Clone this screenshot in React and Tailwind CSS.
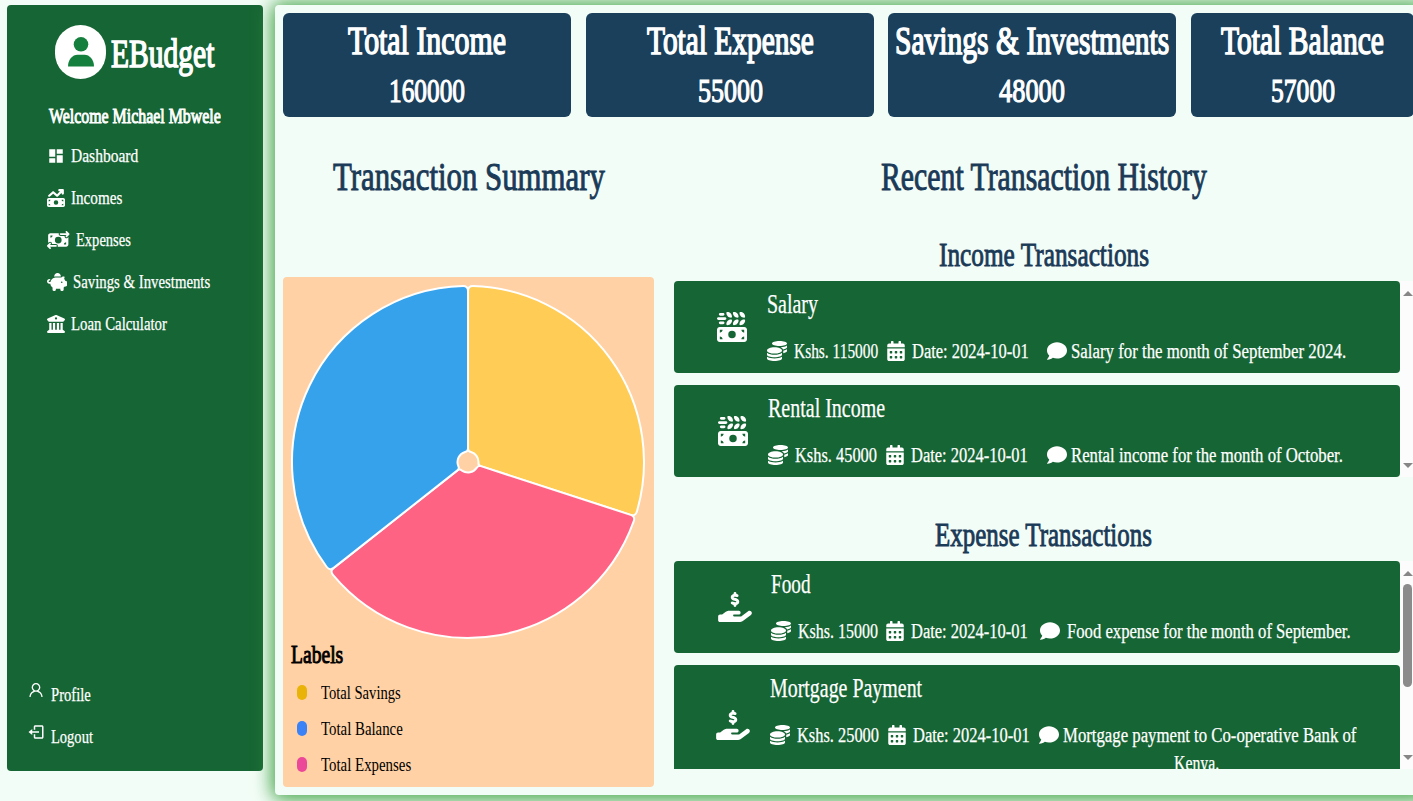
import React, { useLayoutEffect, useRef, useState } from "react";
import { MdDashboard } from "react-icons/md";
import { FaMoneyBillTrendUp, FaMoneyBillTransfer, FaMoneyBillWheat, FaHandHoldingDollar, FaPiggyBank, FaBuildingColumns } from "react-icons/fa6";
import { FaCalendarAlt, FaCoins, FaComment } from "react-icons/fa";
import { AiOutlineUser } from "react-icons/ai";
import { BiLogOut } from "react-icons/bi";

// Condenses a line of serif text to the given width.
function Condensed({ w, className = "", children }) {
  const ref = useRef(null);
  const [scale, setScale] = useState(0.8);
  useLayoutEffect(() => {
    setScale(w / ref.current.offsetWidth);
  }, [w, children]);
  return (
    <span className={"inline-flex shrink-0 whitespace-nowrap " + className} style={{ width: w }}>
      <span ref={ref} className="block shrink-0 origin-left" style={{ transform: `scaleX(${scale})` }}>
        {children}
      </span>
    </span>
  );
}

const nav = [
  { icon: MdDashboard, label: "Dashboard", w: 67, iconClass: "w-[18px]" },
  { icon: FaMoneyBillTrendUp, label: "Incomes", w: 51, iconClass: "w-[18px]" },
  { icon: FaMoneyBillTransfer, label: "Expenses", w: 55, iconClass: "w-[22.5px]" },
  { icon: FaPiggyBank, label: "Savings & Investments", w: 137, iconClass: "w-5" },
  { icon: FaBuildingColumns, label: "Loan Calculator", w: 96, iconClass: "w-[18px]" },
];

const cards = [
  ["Total Income", 158, "160000", 76, "w-72"],
  ["Total Expense", 167, "55000", 65, "w-72"],
  ["Savings & Investments", 274, "48000", 66, "w-72"],
  ["Total Balance", 163, "57000", 64, "w-[223px]"],
];

function Sidebar() {
  return (
    <aside className="ml-[7px] mt-[5px] flex h-[766px] w-64 shrink-0 flex-col rounded bg-[#166534] text-[19px] text-white">
      <div className="flex items-center gap-[5px] pl-12 pt-5">
        <div className="flex h-[54px] w-[51px] items-center justify-center rounded-full bg-white">
          <svg viewBox="0 0 26 30" className="h-[30px] w-[26px] fill-[#15803d]">
            <circle cx="13" cy="7.300" r="7.300" />
            <path d="M0 29.500C0 22.500 4.500 17.700 9.500 17.700h7C21.500 17.700 26 22.500 26 29.500z" />
          </svg>
        </div>
        <Condensed w={103} className="mt-0.5 text-[41px] leading-[50px] [-webkit-text-stroke:1.600px_white]">EBudget</Condensed>
      </div>
      <div className="mt-[23px] h-[29px] pl-[42px] leading-[28px]">
        <Condensed w={172} className="text-[22px] [-webkit-text-stroke:1px_white]">Welcome Michael Mbwele</Condensed>
      </div>
      <nav className="mt-[11px] flex flex-col gap-3.5 pl-10">
        {nav.map(({ icon: Icon, label, w, iconClass }) => (
          <div key={label} className="flex h-7 items-center gap-1.5">
            <Icon className={"h-[18px] shrink-0 " + iconClass} />
            <Condensed w={w} className="[-webkit-text-stroke:0.250px_white]">{label}</Condensed>
          </div>
        ))}
      </nav>
      <div className="mb-5 mt-auto flex flex-col gap-3.5 pl-5">
        <div className="flex h-7 items-center gap-1.5">
          <AiOutlineUser className="-mt-2.5 h-[18px] w-[18px]" />
          <Condensed w={40} className="[-webkit-text-stroke:0.250px_white]">Profile</Condensed>
        </div>
        <div className="flex h-7 items-center gap-1.5">
          <BiLogOut className="-mt-2.5 h-[18px] w-[18px]" />
          <Condensed w={42} className="[-webkit-text-stroke:0.250px_white]">Logout</Condensed>
        </div>
      </div>
    </aside>
  );
}

const C = 178;
function pt(deg, r, shift = 0) {
  const a = ((deg - 90) * Math.PI) / 180 + shift / r;
  return `${(C + r * Math.cos(a)).toFixed(2)} ${(C + r * Math.sin(a)).toFixed(2)}`;
}

// Ring segment with rounded corners.
function slice(a0, a1) {
  const R = 176;
  const r = 10.5;
  const k = 5;
  const n = 3;
  const large = a1 - a0 > 180 ? 1 : 0;
  return [
    `M${pt(a0, r + n)}L${pt(a0, R - k)}Q${pt(a0, R)} ${pt(a0, R, k)}`,
    `A${R} ${R} 0 ${large} 1 ${pt(a1, R, -k)}Q${pt(a1, R)} ${pt(a1, R - k)}`,
    `L${pt(a1, r + n)}Q${pt(a1, r)} ${pt(a1, r, -n)}`,
    `A${r} ${r} 0 ${large} 0 ${pt(a0, r, n)}Q${pt(a0, r)} ${pt(a0, r + n)}Z`,
  ].join("");
}

function Pie() {
  return (
    <svg viewBox="0 0 356 356" className="mb-px ml-[7px] mt-1.5 h-[356px] w-[356px]" stroke="#fff" strokeWidth="2" strokeLinejoin="round">
      <path fill="#ffcd56" d={slice(0, 108)} />
      <path fill="#ff6384" d={slice(108, 231.75)} />
      <path fill="#36a2eb" d={slice(231.75, 360)} />
    </svg>
  );
}

function Row({ icon: Icon, iconClass, title, titleW, left, amount, amountW, gapA, dateW, gapB, gapC, note, noteW, extra, extraW, className = "" }) {
  return (
    <div className={"flex shrink-0 rounded bg-[#166534] text-white [-webkit-text-stroke:0.250px_white] " + className}>
      <div className={"shrink-0 " + iconClass}>
        <Icon className="h-full w-full" />
      </div>
      <div className={"flex flex-col " + left}>
        <div className="mt-[7px] h-[33px]">
          <Condensed w={titleW} className="text-[27px] leading-8">{title}</Condensed>
        </div>
        <div className="mt-4 flex h-7 items-center text-[20px] leading-7">
          <FaCoins className="mr-[7px] h-5 w-5" />
          <Condensed w={amountW}>{amount}</Condensed>
          <FaCalendarAlt className={"mr-[7px] h-5 w-[18px] " + gapA} />
          <Condensed w={dateW}>Date: 2024-10-01</Condensed>
          <FaComment className={"h-5 w-5 " + gapB} />
          <Condensed w={noteW} className={gapC}>{note}</Condensed>
        </div>
        {extra && (
          <div className="pl-[404px] text-[20px] leading-7">
            <Condensed w={extraW}>{extra}</Condensed>
          </div>
        )}
      </div>
    </div>
  );
}

function Scrollbar({ thumb }) {
  return (
    <div className="flex w-[13px] shrink-0 flex-col items-center bg-[#fbfcfb] pl-0.5 pt-[10px] pb-[9px]">
      <svg viewBox="0 0 10 5" className="h-[5px] w-[10px] fill-[#868686]"><path d="M0 5L5 0l5 5z" /></svg>
      {thumb && <div className="mt-2 h-[103px] w-[9px] rounded-full bg-[#8b8b8b]" />}
      <svg viewBox="0 0 10 5" className="mt-auto h-[5px] w-[10px] fill-[#868686]"><path d="M0 0h10L5 5z" /></svg>
    </div>
  );
}

const legend = [
  ["Total Savings", 80, "bg-[#eab308]"],
  ["Total Balance", 82, "bg-[#3b82f6]"],
  ["Total Expenses", 90, "bg-[#ec4899]"],
];

export default function App() {
  return (
    <div className="flex h-[801px] w-[1413px] overflow-hidden bg-[#f3fdf7] font-['Liberation_Serif',serif]">
      <Sidebar />
      <main className="ml-3 mt-[5px] h-[790px] w-[1150px] shrink-0 rounded bg-[#f3fdf7] pl-2 pt-2 shadow-[0_1px_20px_2px_#4caf50,0_1px_16px_1px_rgba(0,90,0,0.300)]">
        <div className="flex">
          {cards.map(([label, w, value, vw, size], i) => (
            <div key={label} className={"flex h-[104px] shrink-0 flex-col items-center rounded-md bg-[#1a405b] text-white " + size + (i === 0 ? "" : i === 2 ? " ml-[14px]" : " ml-[15px]")}>
              <Condensed w={w} className="mt-1 text-[41px] leading-[46px] [-webkit-text-stroke:1.600px_white]">{label}</Condensed>
              <Condensed w={vw} className="mt-2 text-[34px] leading-10 [-webkit-text-stroke:1.200px_white]">{value}</Condensed>
            </div>
          ))}
        </div>
        <div className="flex text-[#1a3a57]">
          <section className="w-[371px]">
            <div className="flex h-40 justify-center pt-[35px]">
              <Condensed w={272} className="text-[41px] leading-[48px] [-webkit-text-stroke:1px_#1a3a57]">Transaction Summary</Condensed>
            </div>
            <div className="flex h-[510px] flex-col rounded bg-[#ffd1a4] pt-px text-black">
              <Pie />
              <Condensed w={52} className="ml-2 text-[26px] leading-7 [-webkit-text-stroke:1px_black]">Labels</Condensed>
              <div className="mt-[9px] flex flex-col gap-2 pl-[14px] text-[19px] leading-7">
                {legend.map(([label, w, color]) => (
                  <div key={label} className="flex h-7 items-center gap-[14px]">
                    <i className={"h-[15px] w-2.5 rounded-full " + color} />
                    <Condensed w={w} className="mt-0.5">{label}</Condensed>
                  </div>
                ))}
              </div>
            </div>
          </section>
          <section className="ml-5 w-[739px]">
            <div className="flex h-[118px] justify-center pt-[35px]">
              <Condensed w={326} className="text-[41px] leading-[48px] [-webkit-text-stroke:1px_#1a3a57]">Recent Transaction History</Condensed>
            </div>
            <div className="flex h-[46px] justify-center">
              <Condensed w={210} className="text-[33px] leading-10 [-webkit-text-stroke:0.900px_#1a3a57]">Income Transactions</Condensed>
            </div>
            <div className="flex h-[196px]">
              <div className="flex w-[726px] flex-col gap-3 overflow-hidden">
                <Row icon={FaMoneyBillWheat} iconClass="ml-[43px] mt-[31px] h-[30px] w-[30px]" left="ml-5" className="h-[92px]" title="Salary" titleW={51} amount="Kshs. 115000" amountW={84} gapA="ml-[9px]" dateW={117} gapB="ml-[18px]" gapC="ml-1" note="Salary for the month of September 2024." noteW={275} />
                <Row icon={FaMoneyBillWheat} iconClass="ml-11 mt-[31px] h-[30px] w-[30px]" left="ml-5" className="h-[92px]" title="Rental Income" titleW={117} amount="Kshs. 45000" amountW={82} gapA="ml-[9px]" dateW={117} gapB="ml-[19px]" gapC="ml-1" note="Rental income for the month of October." noteW={272} />
              </div>
              <Scrollbar />
            </div>
            <div className="flex h-[84px] justify-center pt-[38px]">
              <Condensed w={217} className="text-[33px] leading-10 [-webkit-text-stroke:0.900px_#1a3a57]">Expense Transactions</Condensed>
            </div>
            <div className="flex h-[208px]">
              <div className="flex w-[726px] flex-col gap-3 overflow-hidden">
                <Row icon={FaHandHoldingDollar} iconClass="ml-11 mt-[31px] h-[30px] w-[34px]" left="ml-[19px]" className="h-[92px]" title="Food" titleW={40} amount="Kshs. 15000" amountW={80} gapA="ml-[8px]" dateW={117} gapB="ml-[12px]" gapC="ml-[7px]" note="Food expense for the month of September." noteW={284} />
                <Row icon={FaHandHoldingDollar} iconClass="ml-[42px] mt-[45px] h-[30px] w-[34px]" left="ml-5" className="h-[120px]" title="Mortgage Payment" titleW={152} amount="Kshs. 25000" amountW={82} gapA="ml-[9px]" dateW={117} gapB="ml-[9px]" gapC="ml-1" note="Mortgage payment to Co-operative Bank of" noteW={293} extra="Kenya." extraW={45} />
              </div>
              <Scrollbar thumb />
            </div>
          </section>
        </div>
      </main>
    </div>
  );
}
